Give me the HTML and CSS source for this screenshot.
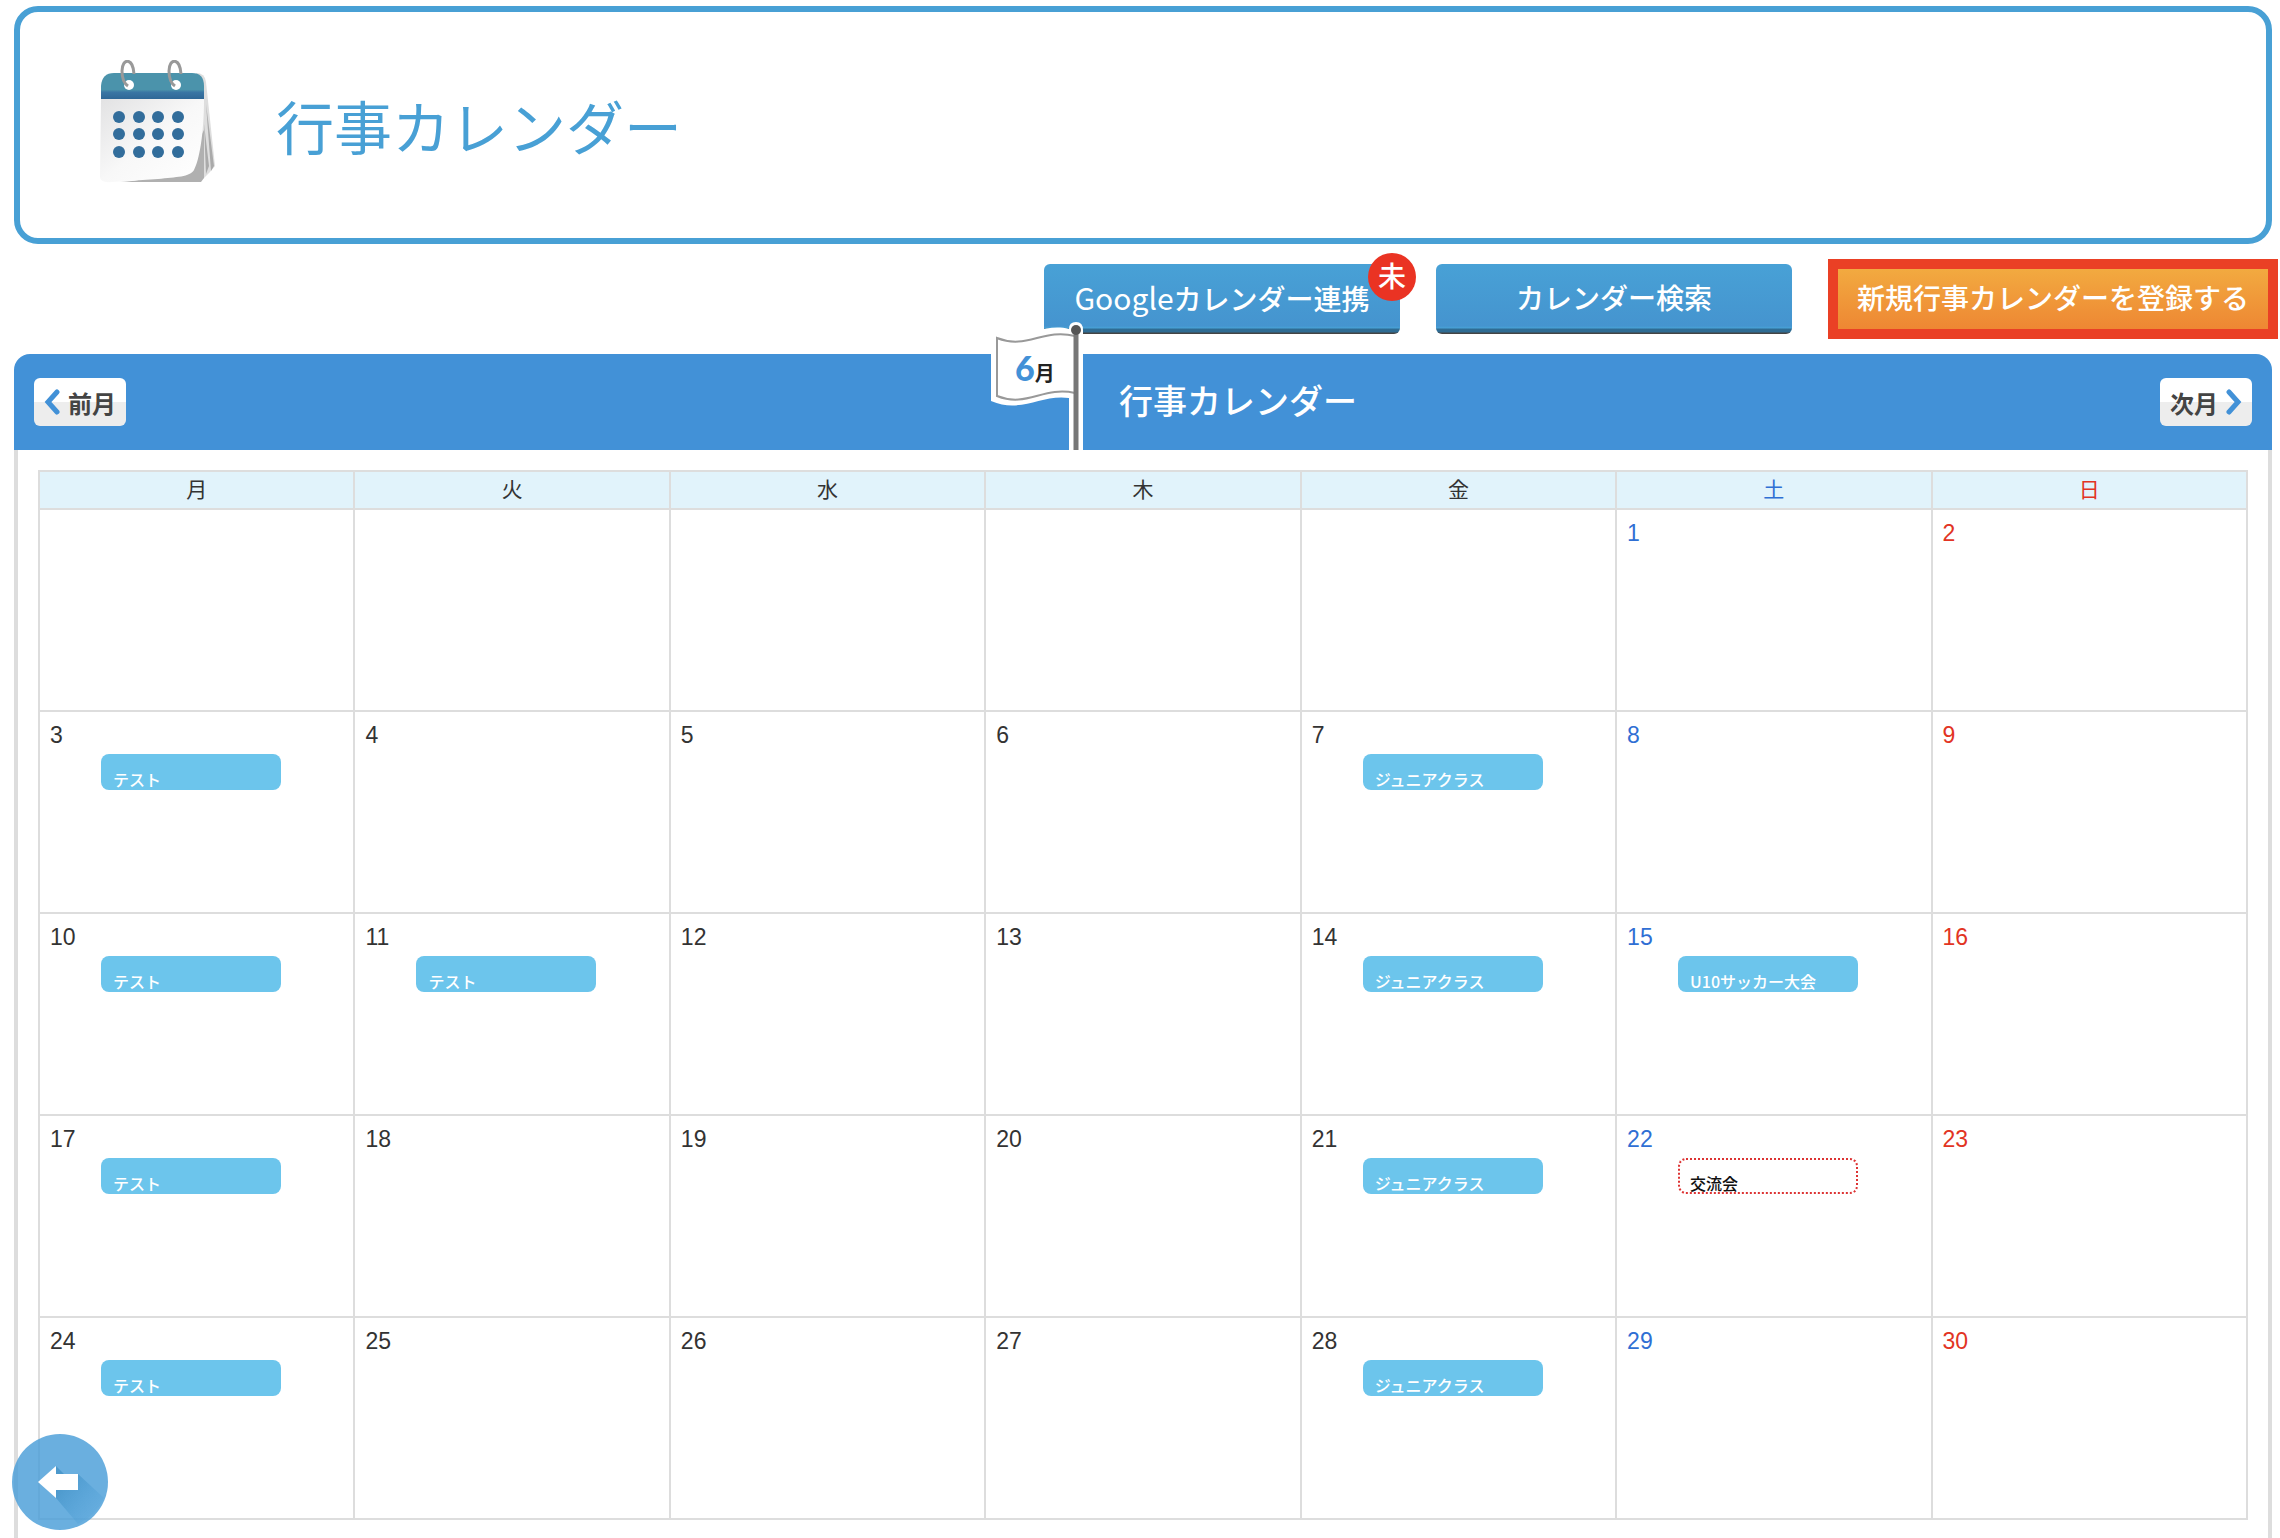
FILE: index.html
```
<!DOCTYPE html>
<html lang="ja">
<head>
<meta charset="utf-8">
<title>行事カレンダー</title>
<link rel="stylesheet" href="styles.css">
</head>
<body>
<header class="page-header">
  <svg class="page-icon" viewBox="0 0 116 124" aria-hidden="true">
    <defs>
      <linearGradient id="paper" x1="0" y1="0" x2="1" y2="1"><stop offset="0" stop-color="#e2e2e3"/><stop offset=".5" stop-color="#f8f8f8"/><stop offset="1" stop-color="#fff"/></linearGradient>
      <linearGradient id="band" x1="0" y1="0" x2="0" y2="1"><stop offset="0" stop-color="#4b93ab"/><stop offset=".64" stop-color="#4b93ab"/><stop offset=".74" stop-color="#3a76a4"/><stop offset="1" stop-color="#2f6796"/></linearGradient>
    </defs>
    <path d="M96 13q9 0 10 9l9 84-5 6-6 6-8 4z" fill="#dedede"/>
    <path d="M106 44l8 62-3 5zM104 64l5 42-3 8z" fill="#aaa"/>
    <path d="M20 122q60-2 84-52v48l-3 4z" fill="#b0b0b0"/>
    <path d="M1 39h103c0 36-5 62-10 71-4 7-18 7-36 9L12 122Q0 123 0 117z" fill="url(#paper)"/>
    <path d="M1 39V26Q2 13 14 13h78q12 0 12 13v13z" fill="url(#band)"/>
    <g fill="#326d9b"><circle cx="19" cy="57" r="6"/><circle cx="39" cy="57" r="6"/><circle cx="58" cy="57" r="6"/><circle cx="78" cy="57" r="6"/><circle cx="19" cy="74" r="6"/><circle cx="39" cy="74" r="6"/><circle cx="58" cy="74" r="6"/><circle cx="78" cy="74" r="6"/><circle cx="19" cy="92" r="6"/><circle cx="39" cy="92" r="6"/><circle cx="58" cy="92" r="6"/><circle cx="78" cy="92" r="6"/></g>
    <g fill="#fff"><circle cx="29" cy="25" r="5"/><circle cx="76" cy="25" r="5"/></g>
    <g fill="none" stroke="#999" stroke-width="3"><path d="M34 14C33-3 22-2 22 11c0 8 3 13 6 15M81 14C80-3 69-2 69 11c0 8 3 13 6 15"/></g>
  </svg>
  <h1 class="page-title">行事カレンダー</h1>
</header>

<nav class="actions">
  <button type="button" class="action"><span class="latin">Google</span>カレンダー連携<span class="badge">未</span></button>
  <button type="button" class="action">カレンダー検索</button>
  <button type="button" class="action action-new">新規行事カレンダーを登録する</button>
</nav>

<main class="calendar">
  <div class="calendar-bar">
    <button type="button" class="month-button"><svg width="16" height="26" viewBox="0 0 16 26" aria-hidden="true"><path d="M13 3L4 13l9 10"/></svg>前月</button>
    <div class="month-heading">
      <div class="flag">
        <svg viewBox="0 0 92 128" aria-hidden="true">
          <path d="M0 14q0-5 6-4C30 22 50 0 78 7q0-7 7-7 7 0 7 8v120H78V76C50 72 30 92 0 79z" fill="#fff"/>
          <path d="M84 14C52 6 36 28 6 16v58c30 12 46-10 78-3" fill="none" stroke="#999" stroke-width="2"/>
          <path d="M85 8v120" stroke="#777" stroke-width="5"/>
          <circle cx="85" cy="8" r="5" fill="#555"/>
        </svg>
        <span class="flag-month"><b>6</b>月</span>
      </div>
      <h2 class="calendar-title">行事カレンダー</h2>
    </div>
    <button type="button" class="month-button">次月<svg width="16" height="26" viewBox="0 0 16 26" aria-hidden="true"><path d="M3 3l9 10-9 10"/></svg></button>
  </div>
  <div class="calendar-body">
    <table class="month">
      <thead><tr><th>月</th><th>火</th><th>水</th><th>木</th><th>金</th><th class="sat">土</th><th class="sun">日</th></tr></thead>
      <tbody>
        <tr><td></td><td></td><td></td><td></td><td></td><td class="sat">1</td><td class="sun">2</td></tr>
        <tr><td>3<a href="#" class="event">テスト</a></td><td>4</td><td>5</td><td>6</td><td>7<a href="#" class="event">ジュニアクラス</a></td><td class="sat">8</td><td class="sun">9</td></tr>
        <tr><td>10<a href="#" class="event">テスト</a></td><td>11<a href="#" class="event">テスト</a></td><td>12</td><td>13</td><td>14<a href="#" class="event">ジュニアクラス</a></td><td class="sat">15<a href="#" class="event">U10サッカー大会</a></td><td class="sun">16</td></tr>
        <tr><td>17<a href="#" class="event">テスト</a></td><td>18</td><td>19</td><td>20</td><td>21<a href="#" class="event">ジュニアクラス</a></td><td class="sat">22<a href="#" class="event event-open">交流会</a></td><td class="sun">23</td></tr>
        <tr><td>24<a href="#" class="event">テスト</a></td><td>25</td><td>26</td><td>27</td><td>28<a href="#" class="event">ジュニアクラス</a></td><td class="sat">29</td><td class="sun">30</td></tr>
      </tbody>
    </table>
  </div>
</main>

<button type="button" class="back" aria-label="戻る">
  <svg viewBox="0 0 96 96" aria-hidden="true">
    <defs><linearGradient id="shade" x1="0" y1="0" x2="1" y2="1"><stop offset=".2" stop-color="#3f8fc4"/><stop offset=".85" stop-color="#4c9fd9" stop-opacity=".2"/></linearGradient></defs>
    <circle cx="48" cy="48" r="48" fill="#4c9fd9" opacity=".83"/>
    <path d="M44 32l8 8h14l26 24q-8 18-26 26L44 64z" fill="url(#shade)" opacity=".7"/>
    <path d="M26 48l18-16v8h22v16H44v8z" fill="#fff"/>
  </svg>
</button>
</body>
</html>
```
FILE: styles.css
```
* { box-sizing: border-box; }

body {
  margin: 0;
  min-height: 100vh;
  padding: 6px 8px 0 14px;
  display: flex;
  flex-direction: column;
  background: #fff;
  color: #333;
  font-family: "Liberation Sans", "Noto Sans CJK JP", sans-serif;
}

button {
  margin: 0;
  padding: 0;
  border: 0;
  font-family: "Noto Sans CJK JP", sans-serif;
  cursor: pointer;
}

.page-header {
  display: flex;
  align-items: center;
  gap: 60px;
  height: 238px;
  padding: 0 80px 6px;
  border: 6px solid #48a0d5;
  border-radius: 24px;
}

.page-icon { width: 116px; height: 124px; }

.page-title {
  margin: 0;
  padding-top: 16px;
  font-size: 58px;
  line-height: 80px;
  font-weight: 400;
  color: #48a0d5;
}

.actions {
  display: flex;
  justify-content: flex-end;
  align-items: center;
  gap: 36px;
  height: 110px;
  margin-right: -6px;
}

.action {
  position: relative;
  width: 356px;
  height: 70px;
  padding-bottom: 4px;
  border-radius: 6px;
  background: linear-gradient(#48a1d6, #4594cf 62px, #48a1d6 64px, #2f6c93 65px, #2f6c93 68px, #444 69px);
  color: #fff;
  font-size: 28px;
  font-weight: 500;
  line-height: 40px;
}

.action .latin { font-size: 30px; font-weight: 400; }

.action-new {
  width: 450px;
  height: 80px;
  border: 10px solid #ea4025;
  border-radius: 0;
  background: linear-gradient(#f2aa40, #ee8733);
}

.badge {
  position: absolute;
  top: -11px;
  right: -16px;
  width: 48px;
  height: 48px;
  border-radius: 50%;
  background: #ea3323;
  font-size: 28px;
  line-height: 44px;
}

.calendar { flex: 1; display: flex; flex-direction: column; }

.calendar-bar {
  display: flex;
  justify-content: space-between;
  align-items: center;
  height: 96px;
  padding: 0 20px;
  border-radius: 16px 16px 0 0;
  background: #4291d7;
}

.month-button {
  display: flex;
  justify-content: center;
  align-items: center;
  gap: 8px;
  width: 92px;
  height: 48px;
  border-radius: 6px;
  background: linear-gradient(#fff 50%, #ededed 50%);
  color: #444;
  font-size: 24px;
  font-weight: 700;
}

.month-button path { fill: none; stroke: #4291d7; stroke-width: 5; stroke-linecap: round; }

.month-heading {
  display: flex;
  align-items: center;
  gap: 36px;
  padding-left: 62px;
}

.flag {
  position: relative;
  align-self: flex-end;
  width: 92px;
  height: 128px;
  margin-top: -32px;
}

.flag svg { display: block; width: 92px; height: 128px; }

.flag-month {
  position: absolute;
  top: 28px;
  left: 24px;
  color: #222;
  font-size: 20px;
  line-height: 36px;
  font-weight: 700;
}

.flag-month b { color: #4291d7; font-family: Lato, sans-serif; font-size: 34px; }

.calendar-title {
  margin: 0;
  color: #fff;
  font-size: 34px;
  line-height: 48px;
  font-weight: 500;
}

.calendar-body {
  flex: 1;
  padding: 20px 20px 0;
  border: solid #ddd;
  border-width: 0 4px;
}

.month { width: 100%; table-layout: fixed; border-collapse: collapse; }

.month th,
.month td { border: 2px solid #ddd; }

.month th {
  height: 38px;
  padding: 0;
  background: #e1f3fb;
  font-size: 21px;
  line-height: 30px;
  font-weight: 400;
}

.month td {
  height: 202px;
  padding: 8px 10px 0;
  vertical-align: top;
  font-size: 23px;
  line-height: 30px;
}

.month .sat { color: #2f6fd4; }
.month .sun { color: #e23423; }

.event {
  display: block;
  width: 180px;
  height: 36px;
  margin: 4px 0 0 51px;
  padding: 13px 12px 0;
  overflow: hidden;
  border-radius: 8px;
  background: #6cc5ec;
  color: #fff;
  font-family: "Noto Sans CJK JP", sans-serif;
  font-size: 16px;
  line-height: 24px;
  font-weight: 500;
  text-decoration: none;
}

.event-open {
  padding: 11px 10px 0;
  border: 2px dotted #d33;
  background: #fff;
  color: #111;
}

.back {
  position: fixed;
  left: 12px;
  bottom: 8px;
  width: 96px;
  height: 96px;
  border-radius: 50%;
  background: none;
}

.back svg { display: block; }
```
